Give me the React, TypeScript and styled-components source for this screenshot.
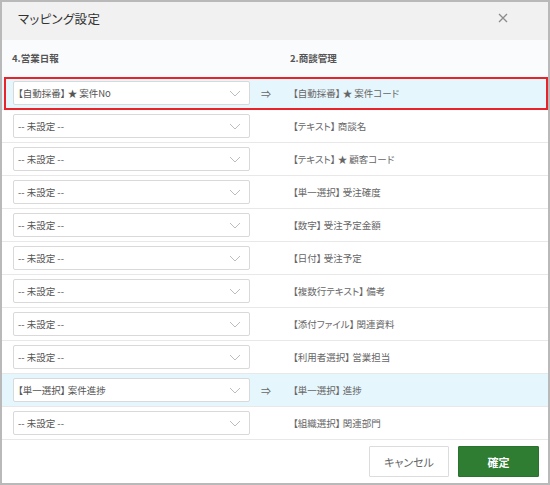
import React from "react";
import styled, { createGlobalStyle } from "styled-components";

const GlobalStyle = createGlobalStyle`
  html, body {
    margin: 0;
    padding: 0;
    background: #ffffff;
  }
  * {
    box-sizing: border-box;
  }
`;

type Mapping = {
  source: string | null;
  target: string;
};

const mappings: Array<Mapping> = [
  { source: "【自動採番】 ★ 案件No", target: "【自動採番】 ★ 案件コード" },
  { source: null, target: "【テキスト】 商談名" },
  { source: null, target: "【テキスト】 ★ 顧客コード" },
  { source: null, target: "【単一選択】 受注確度" },
  { source: null, target: "【数字】 受注予定金額" },
  { source: null, target: "【日付】 受注予定" },
  { source: null, target: "【複数行テキスト】 備考" },
  { source: null, target: "【添付ファイル】 関連資料" },
  { source: null, target: "【利用者選択】 営業担当" },
  { source: "【単一選択】 案件進捗", target: "【単一選択】 進捗" },
  { source: null, target: "【組織選択】 関連部門" },
];

const Chevron: React.FC = () => (
  <svg width="12" height="7" viewBox="0 0 12 7">
    <path d="M1 1 L6 6 L11 1" fill="none" stroke="#bdbdbd" strokeWidth="1" />
  </svg>
);

const CloseIcon: React.FC = () => (
  <svg width="10" height="10" viewBox="0 0 10 10">
    <path d="M1 1 L9 9 M9 1 L1 9" fill="none" stroke="#8c8c8c" strokeWidth="1.3" />
  </svg>
);

export default function App() {
  return (
    <>
      <GlobalStyle />
      <Dialog>
        <Header>
          <Title>マッピング設定</Title>
          <CloseIcon />
        </Header>
        <ColumnHead>
          <HeadLabel>4.営業日報</HeadLabel>
          <span />
          <HeadLabel>2.商談管理</HeadLabel>
        </ColumnHead>
        <Rows>
          {mappings.map((m, i) => (
            <Row key={i} $mapped={m.source !== null} $focused={i === 0}>
              <Select>
                <SelectText>{m.source ?? "-- 未設定 --"}</SelectText>
                <Chevron />
              </Select>
              <Arrow>{m.source !== null ? "⇒" : ""}</Arrow>
              <Target>{m.target}</Target>
            </Row>
          ))}
        </Rows>
        <Footer>
          <CancelButton>キャンセル</CancelButton>
          <ConfirmButton>確定</ConfirmButton>
        </Footer>
      </Dialog>
    </>
  );
}

const font = `"Noto Sans CJK JP", "Noto Sans", sans-serif`;

const Dialog = styled.div`
  width: 550px;
  height: 485px;
  border: 2px solid #b9b9b9;
  background: #ffffff;
  display: flex;
  flex-direction: column;
  font-family: ${font};
  font-feature-settings: "palt";
  color: #444;
`;

const Header = styled.div`
  height: 38px;
  flex-shrink: 0;
  background: #f1f1f1;
  display: flex;
  align-items: center;
  justify-content: space-between;
  padding: 0 40px 6px 16px;
`;

const Title = styled.h2`
  margin: 0;
  font-size: 12.5px;
  font-weight: 400;
  color: #333;
  letter-spacing: 0.3px;
`;

const ColumnHead = styled.div`
  height: 37px;
  flex-shrink: 0;
  background: #fafbfc;
  display: grid;
  grid-template-columns: 237px 41px 1fr;
  align-items: center;
  padding: 0 0 2px 10px;
`;

const HeadLabel = styled.span`
  font-size: 9.5px;
  font-weight: 700;
  color: #555;
`;

const Rows = styled.div`
  display: flex;
  flex-direction: column;
`;

const Row = styled.div<{ $mapped: boolean; $focused: boolean }>`
  position: relative;
  height: 33px;
  display: grid;
  grid-template-columns: 237px 43px 1fr;
  align-items: center;
  padding-left: 11px;
  background: ${({ $mapped }) => ($mapped ? "#e6f6fd" : "#ffffff")};
  border-bottom: 1px solid #e8e8e8;

  &::after {
    content: "";
    display: ${({ $focused }) => ($focused ? "block" : "none")};
    position: absolute;
    top: 0;
    bottom: -1px;
    left: 2px;
    right: 0;
    border: 2px solid #e8232a;
  }
`;

const Select = styled.div`
  height: 24px;
  background: #ffffff;
  border: 1px solid #d9d9d9;
  border-radius: 2px;
  display: flex;
  align-items: center;
  justify-content: space-between;
  padding: 0 8px 0 4px;
`;

const SelectText = styled.span`
  font-size: 9.5px;
  color: #555;
  white-space: pre;
`;

const Arrow = styled.span`
  font-size: 10px;
  color: #666;
  padding-left: 11px;
`;

const Target = styled.span`
  font-size: 9.5px;
  color: #666;
  white-space: pre;
`;

const Footer = styled.div`
  flex: 1;
  display: flex;
  justify-content: flex-end;
  align-items: center;
  gap: 9px;
  padding: 0 9px 0 0;
`;

const BaseButton = styled.button`
  height: 31px;
  font-family: ${font};
  font-feature-settings: "palt";
  font-size: 11px;
  border-radius: 1px;
  cursor: pointer;
`;

const CancelButton = styled(BaseButton)`
  width: 80px;
  background: #ffffff;
  border: 1px solid #dcdcdc;
  color: #666;
`;

const ConfirmButton = styled(BaseButton)`
  width: 81px;
  background: #2e7d32;
  border: 1px solid #2a732e;
  color: #ffffff;
  font-weight: 700;
`;
